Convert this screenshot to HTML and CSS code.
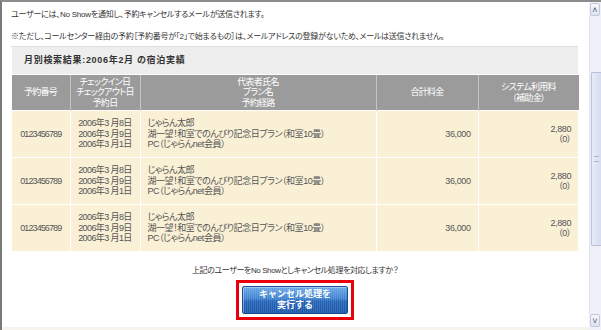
FILE: index.html
```html
<!DOCTYPE html>
<html lang="ja">
<head>
  <meta charset="UTF-8" />
  <meta name="viewport" content="width=device-width, initial-scale=1.0" />
  <title>キャンセル処理確認</title>
  <link rel="stylesheet" href="styles.css">
</head>
<body>
  <div class="window">
    <div class="page">
      <p class="note">ユーザーには、No Showを通知し、予約キャンセルするメールが送信されます。</p>
      <p class="note">※ただし、コールセンター経由の予約［予約番号が「2」で始まるもの］は、メールアドレスの登録がないため、メールは送信されません。</p>

      <table class="result">
        <tr class="title">
          <td colspan="5">月別検索結果:2006年2月 の宿泊実績</td>
        </tr>
        <tr class="head">
          <th class="c-no">予約番号</th>
          <th class="c-date">チェックイン日<br>チェックアウト日<br>予約日</th>
          <th class="c-name">代表者氏名<br>プラン名<br>予約経路</th>
          <th class="c-total">合計料金</th>
          <th class="c-fee">システム利用料<br>（補助金）</th>
        </tr>
        <tr>
          <td class="resv">0123456789</td>
          <td class="dates">2006年3 月8日<br>2006年3 月9日<br>2006年3 月1日</td>
          <td class="name">じゃらん太郎<br>湖一望！和室でのんびり記念日プラン（和室10畳）<br>PC（じゃらんnet会員）</td>
          <td class="num">36,000</td>
          <td class="num">2,880<br>（0）</td>
        </tr>
        <tr>
          <td class="resv">0123456789</td>
          <td class="dates">2006年3 月8日<br>2006年3 月9日<br>2006年3 月1日</td>
          <td class="name">じゃらん太郎<br>湖一望！和室でのんびり記念日プラン（和室10畳）<br>PC（じゃらんnet会員）</td>
          <td class="num">36,000</td>
          <td class="num">2,880<br>（0）</td>
        </tr>
        <tr>
          <td class="resv">0123456789</td>
          <td class="dates">2006年3 月8日<br>2006年3 月9日<br>2006年3 月1日</td>
          <td class="name">じゃらん太郎<br>湖一望！和室でのんびり記念日プラン（和室10畳）<br>PC（じゃらんnet会員）</td>
          <td class="num">36,000</td>
          <td class="num">2,880<br>（0）</td>
        </tr>
      </table>

      <p class="confirm">上記のユーザーをNo Showとしキャンセル処理を対応しますか？</p>

      <div class="action">
        <div class="highlight">
          <button type="button" class="btn-cancel">キャンセル処理を<br>実行する</button>
        </div>
      </div>

      <div class="foot"></div>
    </div>

    <div class="scrollbar">
      <div class="sb-btn">&#x2C4;</div>
      <div class="sb-track">
        <div class="sb-thumb"><span class="grip"></span></div>
      </div>
      <div class="sb-btn">&#x2C5;</div>
    </div>
  </div>
</body>
</html>
```

FILE: styles.css
```css
html, body {
  margin: 0;
  padding: 0;
  background: #fff;
}
body {
  width: 601px;
  height: 330px;
  overflow: hidden;
  font-family: "Liberation Sans", "Noto Sans CJK JP", sans-serif;
  font-size: 9px;
  line-height: 10.5px;
  color: #333;
  font-feature-settings: "palt";
}
.window {
  display: flex;
  height: 328px;
  border-top: 2px solid #8c8c8c;
  border-left: 2px solid #7a7a7a;
}
.page {
  flex: 1;
  display: flex;
  flex-direction: column;
  padding: 0 10px 0 9px;
}
.note {
  margin: 8px 0 0 0;
  font-size: 8px;
  letter-spacing: -0.25px;
}
.note + .note {
  margin-top: 11px;
}
.result {
  margin-top: 4px;
  width: 100%;
  border-collapse: collapse;
  color: #555;
}
.result td, .result th {
  padding: 0;
  border: 1px solid #fff;
}
.title td {
  background: #eeeeee;
  border-top: 1px solid #dedede;
  height: 27px;
  padding-left: 12px;
  font-weight: bold;
  color: #333;
  letter-spacing: 0.7px;
}
.head th {
  background: #9b9b9b;
  color: #fff;
  font-weight: normal;
  height: 35px;
  border-color: #c4c4c4;
  border-top: 0;
  border-bottom: 0;
  letter-spacing: -0.7px;
}
.head th:first-child { border-left: 0; }
.head th:last-child { border-right: 0; }
.c-no { width: 58px; }
.c-date { width: 69px; }
.c-total { width: 101px; }
.c-fee { width: 100px; }
.result tr:not(.title):not(.head) td {
  background: #f9f0d6;
  height: 46px;
}
.result td.resv {
  text-align: center;
  letter-spacing: -0.9px;
}
.result td.dates {
  text-align: center;
  letter-spacing: -0.6px;
}
.result td.name {
  padding-left: 7px;
  letter-spacing: -0.45px;
}
.result td.num {
  text-align: right;
  padding-right: 7px;
  letter-spacing: -0.4px;
}
.confirm {
  margin: 14px 0 0 0;
  text-align: center;
  font-size: 8px;
  letter-spacing: -0.4px;
}
.action {
  display: flex;
  justify-content: center;
  margin-top: 3px;
}
.highlight {
  border: 3px solid #e8000d;
  padding: 3px;
}
.btn-cancel {
  display: block;
  width: 106px;
  height: 28px;
  padding: 0;
  border: 1px solid #1b4f95;
  border-radius: 2px;
  background:
    repeating-linear-gradient(90deg, rgba(255,255,255,0.12) 0 1px, transparent 1px 2px),
    linear-gradient(#6aa6e6 0%, #3f82d0 45%, #2463b6 55%, #1c58a8 100%);
  color: #fff;
  font-family: "Liberation Sans", "Noto Sans CJK JP", sans-serif;
  font-size: 9px;
  font-weight: bold;
  line-height: 10.5px;
  letter-spacing: 0;
  box-shadow: inset 1px 1px 0 rgba(255,255,255,0.35);
}
.foot {
  margin-top: auto;
  height: 3px;
  margin-left: -9px;
  margin-right: -10px;
  background: #f4f3ec;
}
.scrollbar {
  width: 12px;
  display: flex;
  flex-direction: column;
  background: #f0f1f8;
  padding-top: 1px;
  padding-bottom: 3px;
}
.sb-btn {
  height: 11px;
  margin: 0 1px;
  border: 1px solid #c3c9dc;
  border-radius: 2px;
  background: linear-gradient(#f6f7fc, #dfe3f2);
  color: #4d5a7a;
  font-size: 9px;
  line-height: 13px;
  text-align: center;
  overflow: hidden;
}
.sb-track {
  flex: 1;
  display: flex;
  flex-direction: column;
  padding: 56px 0 68px 0;
  border-left: 1px solid #e2e4ee;
}
.sb-thumb {
  flex: 1;
  margin-left: 1px;
  border: 1px solid #b8c2dc;
  border-right: 0;
  border-radius: 2px 0 0 2px;
  background: linear-gradient(90deg, #e8ecf8, #d6dcf0);
  display: flex;
  align-items: center;
  justify-content: center;
}
.grip {
  width: 5px;
  height: 4px;
  border-top: 1px solid #aab4d0;
  border-bottom: 1px solid #aab4d0;
}
```
